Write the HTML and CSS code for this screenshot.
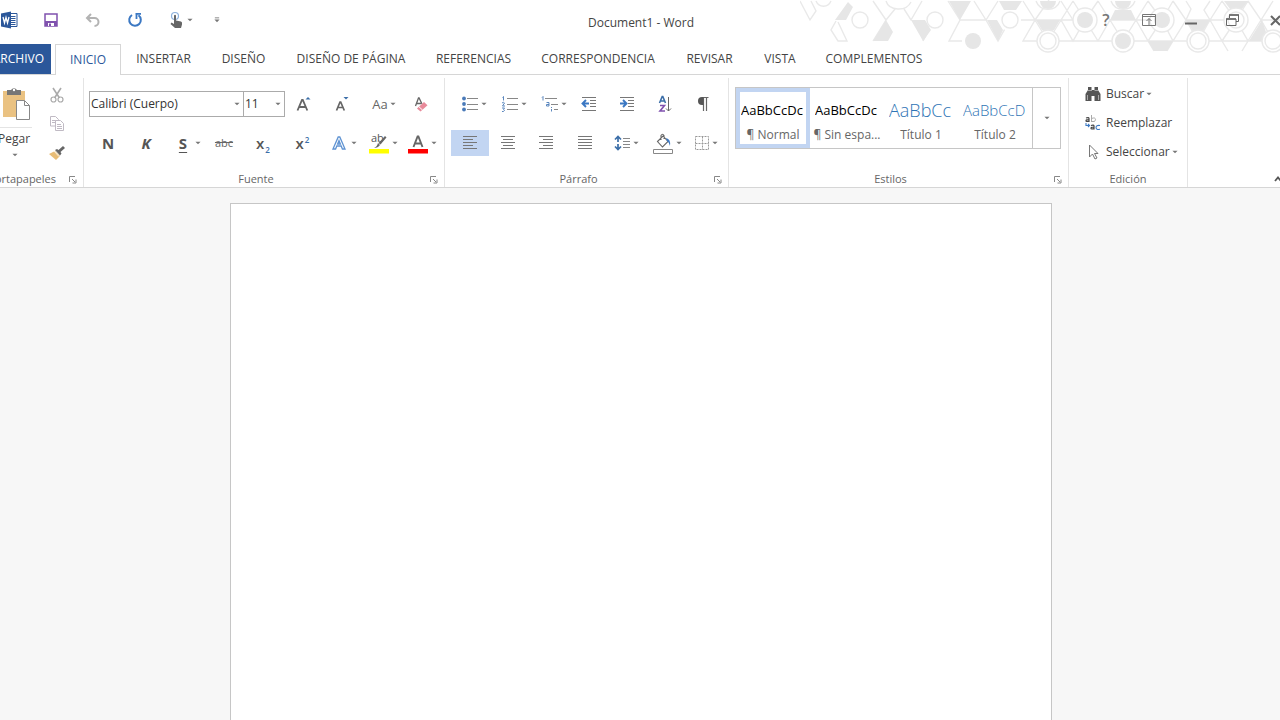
FILE: index.html
```html
<!DOCTYPE html>
<html lang="es">
<head>
<meta charset="utf-8">
<title>Document1 - Word</title>
<link rel="stylesheet" href="styles.css">
</head>
<body>
<svg class="defs" width="0" height="0" aria-hidden="true">
  <symbol id="caret" viewBox="0 0 7 4"><path d="M0.5 0.5h6L3.500 3.500z" fill="#777"/></symbol>
  <symbol id="launch" viewBox="0 0 9 9"><path d="M1.500 7V1.500H7M4 4l3 3M8 4.500V8H4.500" fill="none" stroke="#888"/></symbol>
</svg>

<header class="titlebar">
  <svg class="pattern" viewBox="800 0 480 56" width="480" height="56" aria-hidden="true">
    <g fill="none" stroke="#e9e9e9" stroke-width="1.400">
      <path d="M800 1l10 19 6-9-5-10M816 1c3 7 12 7 15 0M836 21l-5 9 7 11h9l-9-19M873 1l13 19 9-11M886 1c3 10 20 11 25 1M873 41l13-21M904 9l7 11 11-19M923 41l12-21M948 1l12 19-11 21h24M960 20h27M974 1l12 19 12-19M986 20l12 21 12-21M1023 1l12 19-12 21h75M1010 20h75M1061 1l12 19M1061 20l12 21 12-21-12-19M1035 20l14-20M1061 20l12-19M1035 20l13 21 13-21M1098 1l12 19-12 21-13-21 13-19M1110 20h26l12-19M1123 41l-13-21M1123 41l13-21 12 21h-50M1136 20h26M1148 1l14 19-14 21h25l13-21-13-19M1173 41l-11-21 11-19M1173 41l-6 10M1148 41l6 10M1186 1l5 8-5 11h24M1210 1l-6 9 6 10 12 21h-12l-12 0-12-21M1210 20l12-19M1210 20h26l-14-19M1222 41l14-21 12 21-6 10M1222 41l6 10M1198 41l12-21M1222 41h58M1236 20l12-19M1248 1l13 19-13 21M1261 20h19M1261 20l12-19M1261 20l12 21M1173 41h25"/>
      <circle cx="860" cy="20" r="8" fill="#fff"/>
    </g>
    <g fill="#fff" stroke="#e9e9e9" stroke-width="1.400">
      <circle cx="935" cy="20" r="11" stroke="none"/><circle cx="973" cy="41" r="11" stroke="none"/>
      <circle cx="1010" cy="20" r="11" stroke="none"/>
    </g>
    <g fill="#e6e6e6">
      <path d="M848 2l5 5-7 13h-11zM886 20l7 12-5 9h-15zM911 20h14l6 10-8 11zM949 1h22l-11 19zM987 20h10l6 10-5 11zM999 1h23l-6 9h-12zM1036 20h24l-6 10h-12zM1110 20h26l-5-10h-16zM1148 41h25l-6 10h-13zM1186 20h24l-7 11h-10zM1224 1h24l-6 8h-12zM1262 20l5 15-6 6h-12z"/>
      <path d="M1040 1h16a8 8 0 0 1-16 0zM1115 1h16a8 8 0 0 1-16 0z"/>
    </g>
    <g fill="#fff" stroke="#e9e9e9" stroke-width="1.400">
      <circle cx="935" cy="20" r="8"/><circle cx="1010" cy="20" r="8"/>
      <circle cx="1085" cy="20" r="12"/><circle cx="1162" cy="20" r="12"/><circle cx="1236" cy="20" r="12"/><circle cx="1236" cy="20" r="8"/>
      <circle cx="1048" cy="41" r="11"/><circle cx="1048" cy="41" r="8"/><circle cx="1123" cy="41" r="11"/>
      <circle cx="1198" cy="41" r="11"/><circle cx="1198" cy="41" r="8"/><circle cx="1273" cy="41" r="11"/><circle cx="1273" cy="41" r="8"/>
      <path d="M1036 1c4 11 20 11 24 0M1111 1c4 11 20 11 24 0" fill="none"/>
    </g>
    <g fill="#e6e6e6">
      <circle cx="973" cy="41" r="8"/><circle cx="1085" cy="20" r="8"/><circle cx="1162" cy="20" r="8"/><circle cx="1123" cy="41" r="8"/>
    </g>
  </svg>

  <div class="quick">
    <span class="logo"><svg width="17" height="18" viewBox="0 0 17 18"><path d="M8 2.500h8v13H8" fill="#fff" stroke="#2b579a"/><path d="M9 5.500h5.500M9 7.500h5.500M9 9.500h5.500M9 11.500h5.500M9 13.500h5.500" stroke="#2b579a"/><path d="M0 2.500L10 0.500v17L0 15.500z" fill="#2b579a"/><path d="M2 6l1.500 6L5 6.500 6.500 12 8 6" fill="none" stroke="#fff" stroke-width="1.300"/></svg></span>
    <button aria-label="Guardar"><svg width="14" height="14" viewBox="0 0 14 14"><path d="M1 1h12v12H1z" fill="#fff" stroke="#8052ae" stroke-width="1.500"/><path d="M1 8h12v5H1z" fill="#8052ae"/><path d="M4 10h6v3H4z" fill="#fff"/><path d="M5 10.500h2V13H5z" fill="#8052ae"/></svg></button>
    <button aria-label="Deshacer"><svg width="16" height="14" viewBox="0 0 16 14"><path d="M6 1L2 5l4 4M2 5h7.500a4 4 0 0 1 0 8" fill="none" stroke="#b3b3b3" stroke-width="2"/></svg></button>
    <button aria-label="Rehacer"><svg width="16" height="16" viewBox="0 0 16 16"><path d="M5 3A5.800 5.800 0 1 0 11.500 3.300" fill="none" stroke="#3b78c3" stroke-width="2"/><path d="M8.500 1.800H14M9.500 1.500V7" fill="none" stroke="#3b78c3" stroke-width="1.800"/></svg></button>
    <button class="wide" aria-label="Modo táctil"><svg width="20" height="18" viewBox="0 0 20 18"><circle cx="8" cy="5" r="3.500" fill="none" stroke="#8db1dc" stroke-width="1.200"/><path d="M7 4.500q1-1.500 2 0v5l5 1q1.500.5 1 3L14 17H8l-4.500-4 1-1.500L7 13z" fill="#666"/></svg><svg class="caret"><use href="#caret"/></svg></button>
    <button class="thin" aria-label="Personalizar barra"><svg width="6" height="6" viewBox="0 0 7 7"><path d="M1 1h5" stroke="#777"/><path d="M0.500 3h6L3.500 6z" fill="#777"/></svg></button>
  </div>
  <h1 class="title">Document1 - Word</h1>
  <div class="controls">
    <button aria-label="Ayuda" class="help">?</button>
    <button aria-label="Opciones de la cinta"><svg width="14" height="12" viewBox="0 0 14 12"><path d="M.5.5h13v11H.5zM.5 2.500h13M7 11V4.500M4.500 7L7 4.500 9.500 7" fill="none" stroke="#777"/></svg></button>
    <button aria-label="Minimizar"><svg width="12" height="12" viewBox="0 0 12 12"><path d="M0 9.500h12" stroke="#666" stroke-width="2"/></svg></button>
    <button aria-label="Restaurar"><svg width="14" height="12" viewBox="0 0 14 12"><path d="M3.500 4V1h9v6.500H10M.5 5h9.500v6.500H.5z" fill="none" stroke="#666"/><path d="M3 1h10M0 5h10" stroke="#666" stroke-width="1.500"/></svg></button>
    <button aria-label="Cerrar"><svg width="11" height="11" viewBox="0 0 11 11"><path d="M1 1l9 9M10 1l-9 9" stroke="#666" stroke-width="2"/></svg></button>
  </div>
</header>

<nav class="tabs">
  <button class="file"><span>ARCHIVO</span></button>
  <button class="active">INICIO</button>
  <button>INSERTAR</button>
  <button>DISEÑO</button>
  <button>DISEÑO DE PÁGINA</button>
  <button>REFERENCIAS</button>
  <button>CORRESPONDENCIA</button>
  <button>REVISAR</button>
  <button>VISTA</button>
  <button>COMPLEMENTOS</button>
</nav>

<section class="ribbon">
  <div class="group clipboard">
    <div class="body">
      <button class="paste">
        <svg width="30" height="34" viewBox="0 0 30 34"><path d="M3 4h22v26H3z" fill="#eac282"/><path d="M7 3h4a3.500 3.500 0 0 1 6 0h4v5H7z" fill="#777"/><circle cx="14" cy="3" r="1.200" fill="#fff"/><path d="M16.500 13.500h8l5 5v14h-13z" fill="#fff" stroke="#888"/><path d="M24.500 13.500v5h5" fill="none" stroke="#888"/></svg>
        <span class="paste-text">Pegar</span>
        <svg class="caret"><use href="#caret"/></svg>
      </button>
      <div class="stack">
        <button aria-label="Cortar"><svg width="14" height="16" viewBox="0 0 14 16"><path d="M3 1l6.500 10M11 1L4.500 11" fill="none" stroke="#aaa" stroke-width="1.600"/><circle cx="3.500" cy="12.500" r="2.500" fill="none" stroke="#aaa" stroke-width="1.200"/><circle cx="10.500" cy="12.500" r="2.500" fill="none" stroke="#aaa" stroke-width="1.200"/></svg></button>
        <button aria-label="Copiar"><svg width="14" height="15" viewBox="0 0 14 15"><path d="M.5.5h5l3 3V10h-8zM2 4.500h4M2 6.500h4" fill="#fff" stroke="#c0bac4"/><path d="M5.500 4.500h5l3 3v7h-8zM7 8.500h4M7 10.500h5M7 12.500h5" fill="#fff" stroke="#c0bac4"/></svg></button>
        <button aria-label="Copiar formato"><svg width="16" height="14" viewBox="0 0 16 14"><path d="M0 8l6-3 5 5-4 4z" fill="#e8bd77"/><path d="M6 4l5 5.500 1.500-2L11.500 6 16 2l-2-2-4.500 4L8 3z" fill="#666"/><path d="M5 5l5 5.500" stroke="#fff" stroke-width=".8"/></svg></button>
      </div>
    </div>
    <div class="foot"><span>Portapapeles</span><button aria-label="Más opciones de Portapapeles"><svg class="launch"><use href="#launch"/></svg></button></div>
  </div>

  <div class="group font">
    <div class="body">
      <div class="row r1">
        <div class="combos">
          <label class="combo"><select aria-label="Fuente"><option>Calibri (Cuerpo)</option></select><svg class="caret"><use href="#caret"/></svg></label>
          <label class="combo size"><select aria-label="Tamaño de fuente"><option>11</option></select><svg class="caret"><use href="#caret"/></svg></label>
        </div>
        <button aria-label="Aumentar tamaño"><svg width="16" height="16" viewBox="0 0 16 16"><path d="M1.500 14.500L6 4h.8l4.500 10.500M3.300 11h6.300" fill="none" stroke="#666" stroke-width="1.800"/><path d="M9.500 3.500h5L12 1z" fill="#3b6ea8"/></svg></button>
        <button aria-label="Reducir tamaño"><svg width="16" height="16" viewBox="0 0 16 16"><path d="M2.500 14.500L6 6h.7l3.600 8.500M3.600 11.500h5.300" fill="none" stroke="#666" stroke-width="1.700"/><path d="M9.500 1h5L12 3.500z" fill="#3b6ea8"/></svg></button>
        <button class="case" aria-label="Cambiar mayúsculas y minúsculas">Aa<svg class="caret"><use href="#caret"/></svg></button>
        <button aria-label="Borrar formato"><svg width="16" height="16" viewBox="0 0 16 16"><path d="M2.500 10L5.500 2h.6L9 8M3.500 7.500h4.500" fill="none" stroke="#666" stroke-width="1.300"/><path d="M4 12.500L11 6l3.500 3.200-7 6.300z" fill="#e88a9a"/><path d="M6 10.800l3.500 3.200" stroke="#fff"/></svg></button>
      </div>
      <div class="row r2">
        <button class="bold" aria-label="Negrita">N</button>
        <button class="bold italic" aria-label="Cursiva">K</button>
        <button class="underline" aria-label="Subrayado"><span class="under">S</span><svg class="caret"><use href="#caret"/></svg></button>
        <button class="strike" aria-label="Tachado">abc</button>
        <button class="script" aria-label="Subíndice"><span>x<sub>2</sub></span></button>
        <button class="script" aria-label="Superíndice"><span>x<sup>2</sup></span></button>
        <button aria-label="Efectos de texto"><svg width="20" height="18" viewBox="0 0 20 18"><path d="M4 15L9.200 3h1.600L16 15h-2.600l-1.200-3H7.800l-1.200 3zM8.600 10h2.800L10 6.500z" fill="#fff" stroke="#5f93d2" stroke-width="1.300"/></svg><svg class="caret"><use href="#caret"/></svg></button>
        <button aria-label="Resaltado"><svg width="22" height="22" viewBox="0 0 22 22"><text x="3" y="10" class="mini">ab</text><path d="M17 4l1.500 1.500-6 7-2-1.500z" fill="#666"/><path d="M10 11l2 2q-2 3-6 3 3-1 4-5z" fill="#666"/><path d="M1 17h20v4.500H1z" fill="#ff0"/></svg><svg class="caret"><use href="#caret"/></svg></button>
        <button aria-label="Color de fuente"><svg width="22" height="22" viewBox="0 0 22 22"><path d="M6.500 15L10.600 4.500h.8L15.500 15M8 11.500h6" fill="none" stroke="#666" stroke-width="1.900"/><path d="M1 17h20v4.500H1z" fill="#f00"/></svg><svg class="caret"><use href="#caret"/></svg></button>
      </div>
    </div>
    <div class="foot"><span>Fuente</span><button aria-label="Más opciones de Fuente"><svg class="launch"><use href="#launch"/></svg></button></div>
  </div>

  <div class="group para">
    <div class="body">
      <div class="row r1">
        <button aria-label="Viñetas"><svg width="18" height="16" viewBox="0 0 18 16"><circle cx="3" cy="2.500" r="1.900" fill="#4a7ab8"/><circle cx="3" cy="8" r="1.900" fill="#4a7ab8"/><circle cx="3" cy="13.500" r="1.900" fill="#4a7ab8"/><path d="M6 2.500h11M6 8.500h11M6 13.500h11" stroke="#888"/></svg><svg class="caret"><use href="#caret"/></svg></button>
        <button aria-label="Numeración"><svg width="18" height="16" viewBox="0 0 18 16"><path d="M1.500 1.500l1-1V4.500M1 7q1.500-1.500 2.500 0L1.500 10H4M1 12h2.500L2.500 13.500q2 .5 0 2H1" fill="none" stroke="#4a7ab8" stroke-width=".9"/><path d="M6 2.500h11M6 8.500h11M6 13.500h11" stroke="#888"/></svg><svg class="caret"><use href="#caret"/></svg></button>
        <button aria-label="Lista multinivel"><svg width="18" height="16" viewBox="0 0 18 16"><path d="M1 1.500l1-1V4.500M5.500 6.500h2.500V10H5.500V8.500H8M10.500 11v1M10.500 13v2.500" fill="none" stroke="#4a7ab8" stroke-width=".9"/><path d="M4 2.500h12M10 8.500h7M13 13.500h4" stroke="#888"/></svg><svg class="caret"><use href="#caret"/></svg></button>
        <button aria-label="Reducir sangría"><svg width="16" height="16" viewBox="0 0 16 16"><path d="M1 1.500h14M9 4.500h6M9 7.500h6M9 10.500h6M1 14.500h14" stroke="#777"/><path d="M8 7.500H2M5 4L1.500 7.500 5 11" fill="none" stroke="#3b78c3" stroke-width="1.900"/></svg></button>
        <button aria-label="Aumentar sangría"><svg width="16" height="16" viewBox="0 0 16 16"><path d="M1 1.500h14M9 4.500h6M9 7.500h6M9 10.500h6M1 14.500h14" stroke="#777"/><path d="M1 7.500h6M4 4l3.500 3.500L4 11" fill="none" stroke="#3b78c3" stroke-width="1.900"/></svg></button>
        <button aria-label="Ordenar"><svg width="14" height="18" viewBox="0 0 14 18"><path d="M1.500 8L4.200 1.500h.6L7.500 8M2.500 6h4" fill="none" stroke="#3b6ea8" stroke-width="1.600"/><path d="M2 10.500h4.500l-4.500 5.500h5" fill="none" stroke="#8052ae" stroke-width="1.600"/><path d="M10.500 2v14M8 13.500l2.500 2.500 2.500-2.500" fill="none" stroke="#666"/></svg></button>
        <button aria-label="Mostrar todo"><svg width="12" height="16" viewBox="0 0 12 16"><path d="M6 1.500h5.500M6.500 1.500V15M9.500 1.500V15" fill="none" stroke="#666" stroke-width="1.200"/><path d="M6.500 1H5a4 4 0 0 0 0 8h1.500z" fill="#555"/></svg></button>
      </div>
      <div class="row r2">
        <button class="on" aria-label="Alinear a la izquierda"><svg width="16" height="16" viewBox="0 0 16 16"><path d="M1 1.500h14M1 4.500h10M1 7.500h14M1 10.500h10M1 13.500h14" stroke="#777"/></svg></button>
        <button aria-label="Centrar"><svg width="16" height="16" viewBox="0 0 16 16"><path d="M1 1.500h14M3 4.500h10M1 7.500h14M3 10.500h10M1 13.500h14" stroke="#777"/></svg></button>
        <button aria-label="Alinear a la derecha"><svg width="16" height="16" viewBox="0 0 16 16"><path d="M1 1.500h14M5 4.500h10M1 7.500h14M5 10.500h10M1 13.500h14" stroke="#777"/></svg></button>
        <button aria-label="Justificar"><svg width="16" height="16" viewBox="0 0 16 16"><path d="M1 1.500h14M1 4.500h14M1 7.500h14M1 10.500h14M1 13.500h14" stroke="#777"/></svg></button>
        <button aria-label="Interlineado"><svg width="18" height="16" viewBox="0 0 18 16"><path d="M5 1.500V7M5 9v5.500M2 4.500l3-3 3 3M2 11.500l3 3 3-3" fill="none" stroke="#3b6ea8" stroke-width="1.700"/><path d="M10 3.500h7M10 6.500h7M10 9.500h7M10 12.500h7" stroke="#888"/></svg><svg class="caret"><use href="#caret"/></svg></button>
        <button aria-label="Sombreado"><svg width="22" height="22" viewBox="0 0 22 22"><path d="M5.500 9.500L11 4l5 5.500-5.500 5.500zM9 8V3.500q1.500-2.500 3 0V7" fill="none" stroke="#666" stroke-width="1.100"/><path d="M14 6q5 1 4 8-1-4-3-5z" fill="#3b78c3"/><path d="M1.500 17.500h19v4h-19z" fill="#fff" stroke="#888"/></svg><svg class="caret"><use href="#caret"/></svg></button>
        <button aria-label="Bordes"><svg width="16" height="16" viewBox="0 0 16 16"><path d="M1.500 1.500h13v13h-13zM8.500 1.500v13M1.500 8.500h13" fill="none" stroke="#999" stroke-dasharray="2 1"/></svg><svg class="caret"><use href="#caret"/></svg></button>
      </div>
    </div>
    <div class="foot"><span>Párrafo</span><button aria-label="Más opciones de Párrafo"><svg class="launch"><use href="#launch"/></svg></button></div>
  </div>

  <div class="group styles">
    <div class="gallery">
      <button class="style selected"><span class="sample">AaBbCcDc</span><span>¶ Normal</span></button>
      <button class="style"><span class="sample">AaBbCcDc</span><span>¶ Sin espa...</span></button>
      <button class="style"><span class="sample h1">AaBbCc</span><span>Título 1</span></button>
      <button class="style"><span class="sample h2">AaBbCcD</span><span>Título 2</span></button>
      <button class="more" aria-label="Más estilos"><svg class="caret"><use href="#caret"/></svg></button>
    </div>
    <div class="foot"><span>Estilos</span><button aria-label="Más opciones de Estilos"><svg class="launch"><use href="#launch"/></svg></button></div>
  </div>

  <div class="group edit">
    <div class="list">
      <button><svg width="16" height="16" viewBox="0 0 16 16"><path d="M3 1h3.500v3h3V1H13v3l2.500 4v7h-6v-5h-3v5h-6V8L3 4z" fill="#555"/><path d="M3 4.500h4M9.500 4.500H13M2.500 9v5M13.500 9v5" stroke="#ccc" stroke-width=".7"/></svg>Buscar<svg class="caret"><use href="#caret"/></svg></button>
      <button><svg width="16" height="16" viewBox="0 0 16 16"><path d="M1 3q3-1 3 .5V7M4 4.500q-3 0-3 1.300T4 6M6 10.500q3-1 3 .5v3.500M9 12q-3 0-3 1.300t3 .2" fill="none" stroke="#444" stroke-width="1.200"/><path d="M6.500 0v7M6.500 3.500q4-1.500 4 1.200t-4 1.800" fill="none" stroke="#aaa"/><path d="M15 10.500q-4-.5-4 2t4 1.800M1 8v2.500h3M3 9l1.500 1.500L3 12" fill="none" stroke="#3b78c3" stroke-width="1.100"/></svg>Reemplazar</button>
      <button><svg width="16" height="16" viewBox="0 0 16 16"><path d="M4.500 1v12l3-3 2.500 5 2-1-2.500-4.500H13z" fill="#fff" stroke="#777"/></svg>Seleccionar<svg class="caret"><use href="#caret"/></svg></button>
    </div>
    <div class="foot"><span>Edición</span></div>
  </div>
  <button class="collapse" aria-label="Contraer la cinta"><svg width="8" height="6" viewBox="0 0 8 6"><path d="M1 5l3-3.500L7 5" fill="none" stroke="#555" stroke-width="1.800"/></svg></button>
</section>

<main class="workspace"><article class="page" aria-label="Documento"></article></main>
</body>
</html>
```
FILE: styles.css
```css
* { box-sizing: border-box; }
body {
  margin: 0;
  height: 100vh;
  overflow: hidden;
  display: flex;
  flex-direction: column;
  background: #fff;
  color: #444;
  font: 12px/16px "Open Sans", "Noto Sans", sans-serif;
}
button {
  display: flex;
  align-items: center;
  justify-content: center;
  gap: 2px;
  margin: 0;
  padding: 0;
  border: 0;
  background: none;
  color: inherit;
  font: inherit;
  white-space: nowrap;
}
svg { flex: none; display: block; }
.defs { position: absolute; }
.caret { width: 6px; height: 4px; }
.launch { width: 9px; height: 9px; }

.titlebar {
  position: relative;
  display: grid;
  grid-template-columns: 1fr auto 1fr;
  align-items: center;
  height: 44px;
  flex: none;
}
.pattern { position: absolute; top: 0; right: 0; }
.quick, .controls { display: flex; position: relative; height: 40px; align-self: start; }
.quick button { width: 42px; }
.quick .wide { width: 50px; padding-right: 2px; gap: 0; }
.quick .thin { width: 22px; }
.logo { display: flex; align-items: center; width: 30px; padding-left: 1px; }
.title { margin: 0; padding: 1px 0 0 2px; font-size: 12px; font-weight: 400; line-height: 44px; }
.controls { justify-content: flex-end; margin-right: -16px; }
.controls button { width: 42px; flex: none; }
.controls .help { font-size: 16px; font-weight: 600; color: #777; }
.controls button:first-child { margin-right: 1px; }

.tabs {
  display: grid;
  grid-template-columns: 51px 66px 85px 75px 140px 105px 144px 79px 62px 126px;
  height: 31px;
  flex: none;
  border-bottom: 1px solid #d6d6d6;
}
.tabs button { padding-left: 8px; }
.tabs .file {
  justify-content: flex-end;
  overflow: hidden;
  padding: 0 7px 0 0;
  background: #2b579a;
  color: #fff;
}
.tabs .active {
  margin: 0 -4px -1px 4px;
  padding: 0 0 1px;
  border: 1px solid #d6d6d6;
  border-bottom: 0;
  background: #fff;
  color: #2b579a;
}

.ribbon {
  display: flex;
  height: 113px;
  flex: none;
  border-bottom: 1px solid #d6d6d6;
}
.group {
  display: flex;
  flex-direction: column;
  justify-content: space-between;
  flex: none;
  border-right: 1px solid #e4e4e4;
  margin-top: 3px;
  padding-top: 6px;
}
.foot { display: flex; height: 15px; line-height: 14px; font-size: 11px; color: #666; }
.foot span { flex: 1; text-align: center; }
.foot button { width: 16px; justify-content: flex-start; padding-left: 1px; }

.clipboard { width: 84px; padding-top: 2px; overflow: hidden; }
.clipboard .body { display: grid; grid-template-columns: 34px 1fr; }
.clipboard .foot span { display: flex; justify-content: flex-end; min-width: 0; padding-right: 11px; }
.paste { flex-direction: column; justify-content: flex-start; padding-top: 7px; gap: 6px; width: 30px; }
.paste-text { border-top: 1px solid #e4e4e4; padding: 3px 2px 0 0; }
.stack { display: grid; grid-template-rows: 29px 29px 29px; justify-items: center; }
.stack button { width: 36px; padding-right: 3px; }

.row { display: grid; height: 39px; align-items: center; }
.row button { height: 26px; }
.font { width: 361px; }
.font .body { padding-left: 5px; }
.font .r1 { grid-template-columns: 196px 38px 38px 40px 40px; }
.font .r2 { grid-template-columns: 38px 38px 40px 38px 40px 39px 41px 39px 39px; }
.combos { display: grid; grid-template-columns: 153px 1fr; height: 26px; border: 1px solid #ababab; }
.combo { position: relative; display: flex; }
.combo + .combo { border-left: 1px solid #ababab; }
.combo select {
  appearance: none;
  width: 100%;
  border: 0;
  padding: 0 14px 0 1px;
  background: none;
  color: #333;
  font: inherit;
}
.combo .caret { position: absolute; right: 3px; top: 10px; pointer-events: none; }
.row .case { padding-left: 6px; font-size: 13px; color: #666; }
.bold { font-size: 15px; font-weight: 700; color: #555; }
.italic { font-style: italic; }
.row .underline { padding-left: 4px; }
.under { width: 20px; text-align: center; font-size: 15px; font-weight: 700; color: #555; text-decoration: underline; text-decoration-thickness: 1px; text-underline-offset: 3px; }
.row .strike { font-size: 11px; color: #666; text-decoration: line-through; }
.script { font-size: 15px; font-weight: 600; color: #555; }
.script sub, .script sup { font-size: 8px; line-height: 1px; color: #3b6ea8; margin-left: 1px; }
.mini { font-size: 11px; fill: #555; }

.para { width: 284px; }
.para .r1 { grid-template-columns: 40px 40px 40px 30px 46px 30px 46px; padding-left: 9px; }
.para .r2 { grid-template-columns: 38px 38px 38px 39px 44px 38px 40px; padding-left: 6px; }
.on { background: #c2d5f2; }

.styles { width: 340px; }
.gallery {
  display: grid;
  grid-template-columns: 74px 74px 74px 74px 1fr;
  height: 62px;
  margin: 3px 7px 0 6px;
  border: 1px solid #c6c6c6;
}
.style {
  flex-direction: column;
  justify-content: flex-end;
  gap: 5px;
  padding: 0 1px 1px;
  border: 4px solid transparent;
  color: #666;
}
.selected { border-color: #c2d5f2; }
.sample { width: 64px; height: 24px; line-height: 24px; overflow: hidden; text-align: left; font-size: 13px; color: #000; }
.sample.h1 { font-size: 18px; font-weight: 300; color: #2e74b5; }
.sample.h2 { font-size: 15px; font-weight: 300; color: #2e74b5; }
.more { border-left: 1px solid #c6c6c6; }

.edit { width: 119px; padding-top: 1px; }
.list { display: grid; grid-template-rows: 29px 29px 29px; padding-left: 16px; }
.list button { justify-content: flex-start; gap: 2px; }
.list button svg:first-child { margin-right: 3px; }
.collapse { align-self: flex-end; margin-left: auto; margin-right: -2px; height: 16px; }

.workspace { flex: 1; min-height: 0; display: flex; justify-content: center; padding: 15px 0 0 2px; background: #f7f7f7; }
.page { width: 822px; max-width: 100%; border: 1px solid #c6c6c6; border-bottom: 0; background: #fff; }
```
